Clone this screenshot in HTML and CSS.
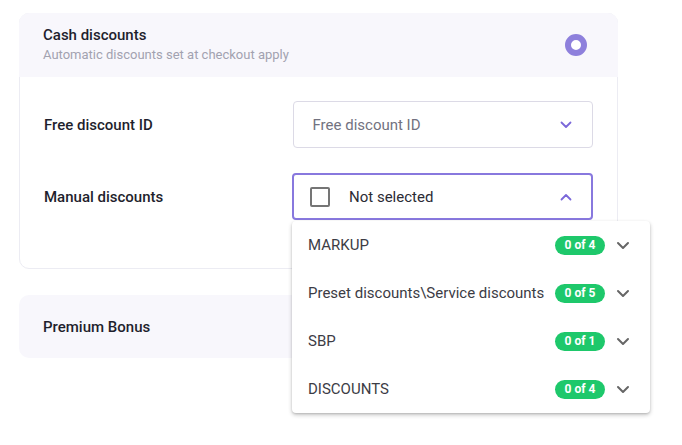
FILE: index.html
```html
<!DOCTYPE html>
<html>
<head>
<meta charset="utf-8">
<link rel="stylesheet" href="styles.css">
</head>
<body>
<div class="page">
  <section class="card">
    <header class="card-head">
      <div class="head-text">
        <div class="title">Cash discounts</div>
        <div class="subtitle">Automatic discounts set at checkout apply</div>
      </div>
      <span class="radio"></span>
    </header>
    <div class="card-body">
      <div class="row">
        <div class="label">Free discount ID</div>
        <div class="select">
          <span class="placeholder">Free discount ID</span>
          <svg class="chev" width="12" height="8" viewBox="0 0 12 8"><polyline points="1.5,1.5 6,6 10.5,1.5" fill="none" stroke="#7b68d9" stroke-width="1.8" stroke-linecap="round" stroke-linejoin="round"/></svg>
        </div>
      </div>
      <div class="row">
        <div class="label">Manual discounts</div>
        <div class="select-wrap">
          <div class="select open">
            <span class="checkbox"></span>
            <span class="value">Not selected</span>
            <svg class="chev" width="12" height="8" viewBox="0 0 12 8"><polyline points="1.5,6.5 6,2 10.5,6.5" fill="none" stroke="#7b68d9" stroke-width="1.8" stroke-linecap="round" stroke-linejoin="round"/></svg>
          </div>
          <ul class="menu">
            <li class="item"><span class="item-name">MARKUP</span><span class="badge">0 of 4</span><svg class="item-chev" width="14" height="9" viewBox="0 0 14 9"><polyline points="2,2 7,7 12,2" fill="none" stroke="#666" stroke-width="2" stroke-linecap="round" stroke-linejoin="round"/></svg></li>
            <li class="item"><span class="item-name">Preset discounts\Service discounts</span><span class="badge">0 of 5</span><svg class="item-chev" width="14" height="9" viewBox="0 0 14 9"><polyline points="2,2 7,7 12,2" fill="none" stroke="#666" stroke-width="2" stroke-linecap="round" stroke-linejoin="round"/></svg></li>
            <li class="item"><span class="item-name">SBP</span><span class="badge">0 of 1</span><svg class="item-chev" width="14" height="9" viewBox="0 0 14 9"><polyline points="2,2 7,7 12,2" fill="none" stroke="#666" stroke-width="2" stroke-linecap="round" stroke-linejoin="round"/></svg></li>
            <li class="item"><span class="item-name">DISCOUNTS</span><span class="badge">0 of 4</span><svg class="item-chev" width="14" height="9" viewBox="0 0 14 9"><polyline points="2,2 7,7 12,2" fill="none" stroke="#666" stroke-width="2" stroke-linecap="round" stroke-linejoin="round"/></svg></li>
          </ul>
        </div>
      </div>
    </div>
  </section>
  <section class="card2">
    <div class="title">Premium Bonus</div>
  </section>
</div>
</body>
</html>
```

FILE: styles.css
```css
* { box-sizing: border-box; }
html, body { margin: 0; padding: 0; background: #fff; }
html, body { min-height: 445px; }
body { font-family: Roboto, "Noto Sans", sans-serif; color: #222230; }

.page {
  padding: 13px 0 0 19px;
  width: 618px;
  min-height: 445px;
  display: flex;
  flex-direction: column;
  gap: 26px;
}

.card {
  border: 1px solid #ececf3;
  border-radius: 10px;
  overflow: visible;
  height: 256px;
  display: flex;
  flex-direction: column;
}

.card-head {
  height: 64px;
  background: #f8f7fc;
  border-radius: 10px 10px 0 0;
  display: flex;
  align-items: center;
  justify-content: space-between;
  padding: 0 31px 0 24px;
  margin: -1px -1px 0 -1px;
}

.head-text { display: flex; flex-direction: column; gap: 3px; padding-bottom: 2px; }

.title {
  font-size: 15px;
  font-weight: 500;
  color: #1f1f2d;
  line-height: 18px;
}

.subtitle {
  font-size: 13px;
  color: #a2a2b0;
  line-height: 16px;
}

.radio {
  width: 22px;
  height: 22px;
  border-radius: 50%;
  border: 6px solid #8e80dc;
  background: #fff;
}

.card-body {
  padding: 24px 24px 0 24px;
  display: flex;
  flex-direction: column;
  gap: 25px;
}

.row {
  display: flex;
  align-items: center;
}

.label {
  width: 249px;
  font-size: 15px;
  font-weight: 500;
  color: #1f1f2d;
}

.select-wrap { position: relative; }

.select {
  width: 301px;
  height: 47px;
  border: 1px solid #dcdae6;
  border-radius: 4px;
  display: flex;
  align-items: center;
  padding: 0 19px;
  font-size: 15px;
}

.select.open {
  border: 2px solid #8878de;
  padding: 0 18px 0 16px;
}

.placeholder { color: #727280; flex: 1; }
.value { color: #2b2b35; flex: 1; }

.chev { margin-right: 1px; }

.checkbox {
  width: 20px;
  height: 20px;
  border: 2px solid #757575;
  border-radius: 2px;
  margin-right: 19px;
}

.menu {
  position: absolute;
  left: 0;
  top: 48px;
  width: 358px;
  margin: 0;
  padding: 0;
  list-style: none;
  background: #fff;
  border-radius: 4px;
  box-shadow: 0 2px 4px rgba(0,0,0,0.22), 0 1px 2px rgba(0,0,0,0.12);
  z-index: 10;
}

.item {
  height: 48px;
  display: flex;
  align-items: center;
  padding: 0 20px 0 16px;
  font-size: 15px;
  color: #3c3c45;
}

.item-name { flex: 1; }

.badge {
  width: 50px;
  height: 19px;
  border-radius: 10px;
  background: #1ec86b;
  color: #fff;
  font-size: 12px;
  font-weight: 700;
  display: flex;
  align-items: center;
  justify-content: center;
  margin-right: 11px;
}

.card2 {
  height: 63px;
  width: 599px;
  background: #f8f7fc;
  border-radius: 10px;
  display: flex;
  align-items: center;
  padding-left: 24px;
}
```
